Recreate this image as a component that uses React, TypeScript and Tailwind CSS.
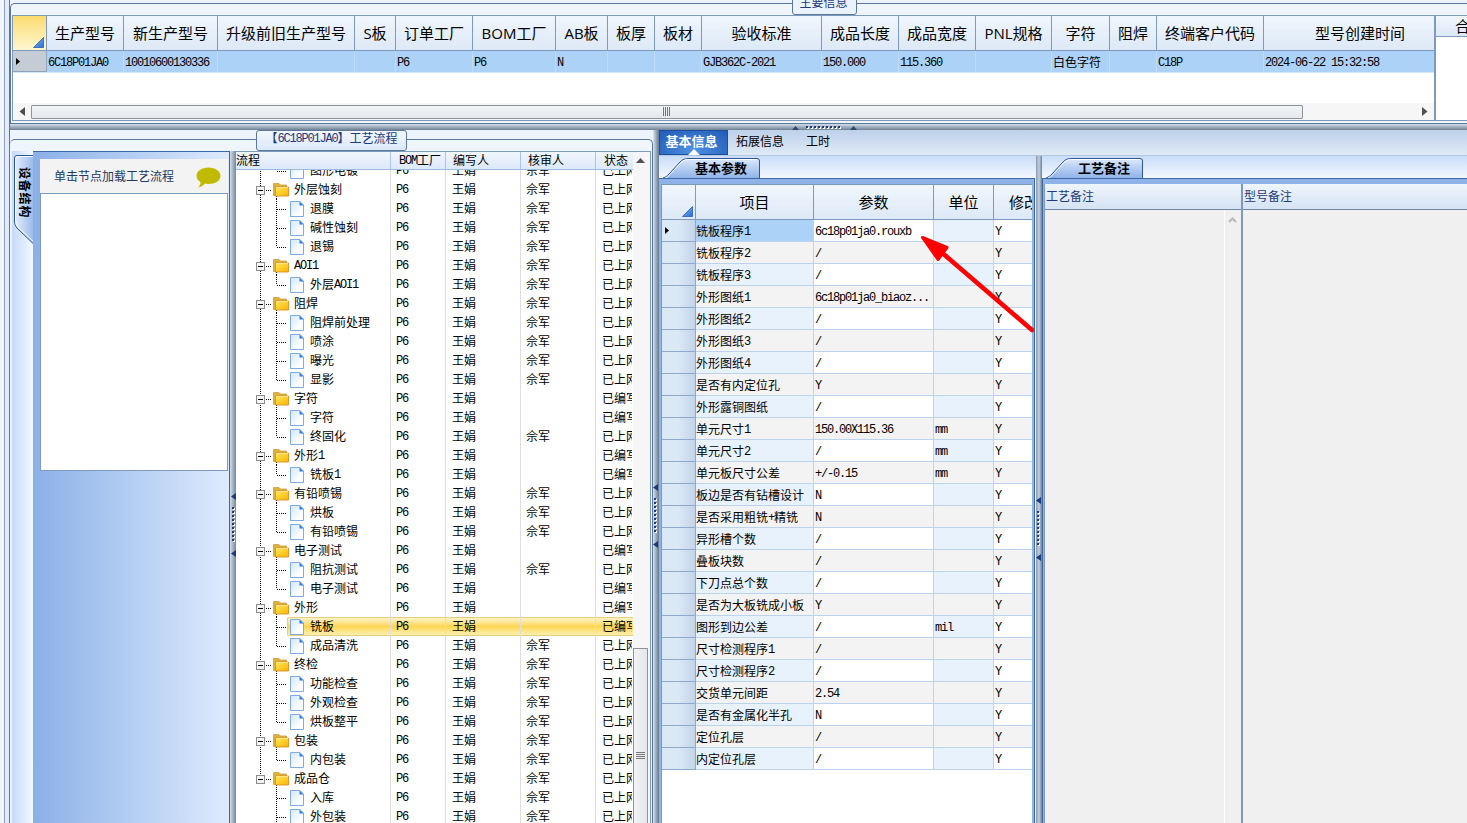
import React from 'react';

const SONG = "font-['Noto_Sans_CJK_SC',sans-serif]";
const HEI = "font-['Open_Sans','Noto_Sans_CJK_SC',sans-serif]";

/* Half-width characters take 6px and full-width ones 12px. */
function T({ s }: { s: string }) {
  const runs = s.match(/[\x20-\x7e]+|[^\x20-\x7e]+/g) ?? [];
  return (
    <span className="font-['Noto_Sans_CJK_SC',sans-serif] whitespace-pre">
      {runs.map((r, i) =>
        r.charCodeAt(0) < 128 ? (
          <span key={i} className="align-[1px] font-['Liberation_Mono',monospace] text-[12px] leading-none tracking-[-1.2px]">{r}</span>
        ) : (
          <span key={i}>{r}</span>
        ),
      )}
    </span>
  );
}

const orders = [
  { h: '生产型号', v: '6C18P01JA0', w: 'w-[77px]' },
  { h: '新生产型号', v: '10010600130336', w: 'w-[94px]' },
  { h: '升级前旧生产型号', v: '', w: 'w-[137px]' },
  { h: 'S板', v: '', w: 'w-[41px]' },
  { h: '订单工厂', v: 'P6', w: 'w-[77px]' },
  { h: 'BOM工厂', v: 'P6', w: 'w-[83px]' },
  { h: 'AB板', v: 'N', w: 'w-[52px]' },
  { h: '板厚', v: '', w: 'w-[47px]' },
  { h: '板材', v: '', w: 'w-[47px]' },
  { h: '验收标准', v: 'GJB362C-2021', w: 'w-[120px]' },
  { h: '成品长度', v: '150.000', w: 'w-[77px]' },
  { h: '成品宽度', v: '115.360', w: 'w-[77px]' },
  { h: 'PNL规格', v: '', w: 'w-[76px]' },
  { h: '字符', v: '白色字符', w: 'w-[58px]' },
  { h: '阻焊', v: '', w: 'w-[47px]' },
  { h: '终端客户代码', v: 'C18P', w: 'w-[107px]' },
  { h: '型号创建时间', v: '2024-06-22 15:32:58', w: 'w-[193px]' },
];

type Node = { n: string; f?: boolean; last?: boolean; done?: boolean; sel?: boolean };
const nodes: Node[] = [
  { n: '图形电镀', last: true, done: true },
  { n: '外层蚀刻', f: true, done: true },
  { n: '退膜', done: true },
  { n: '碱性蚀刻', done: true },
  { n: '退锡', last: true, done: true },
  { n: 'AOI1', f: true, done: true },
  { n: '外层AOI1', last: true, done: true },
  { n: '阻焊', f: true, done: true },
  { n: '阻焊前处理', done: true },
  { n: '喷涂', done: true },
  { n: '曝光', done: true },
  { n: '显影', last: true, done: true },
  { n: '字符', f: true },
  { n: '字符' },
  { n: '终固化', last: true, done: true },
  { n: '外形1', f: true },
  { n: '铣板1', last: true },
  { n: '有铅喷锡', f: true, done: true },
  { n: '烘板', done: true },
  { n: '有铅喷锡', last: true, done: true },
  { n: '电子测试', f: true },
  { n: '阻抗测试', done: true },
  { n: '电子测试', last: true },
  { n: '外形', f: true },
  { n: '铣板', sel: true },
  { n: '成品清洗', last: true, done: true },
  { n: '终检', f: true, done: true },
  { n: '功能检查', done: true },
  { n: '外观检查', done: true },
  { n: '烘板整平', last: true, done: true },
  { n: '包装', f: true, done: true },
  { n: '内包装', last: true, done: true },
  { n: '成品仓', f: true, done: true },
  { n: '入库', done: true },
  { n: '外包装', done: true },
];
const lastRoot = 32;

const params: [string, string, string][] = [
  ['铣板程序1', '6c18p01ja0.rouxb', ''],
  ['铣板程序2', '/', ''],
  ['铣板程序3', '/', ''],
  ['外形图纸1', '6c18p01ja0_biaoz...', ''],
  ['外形图纸2', '/', ''],
  ['外形图纸3', '/', ''],
  ['外形图纸4', '/', ''],
  ['是否有内定位孔', 'Y', ''],
  ['外形露铜图纸', '/', ''],
  ['单元尺寸1', '150.00X115.36', 'mm'],
  ['单元尺寸2', '/', 'mm'],
  ['单元板尺寸公差', '+/-0.15', 'mm'],
  ['板边是否有钻槽设计', 'N', ''],
  ['是否采用粗铣+精铣', 'N', ''],
  ['异形槽个数', '/', ''],
  ['叠板块数', '/', ''],
  ['下刀点总个数', '/', ''],
  ['是否为大板铣成小板', 'Y', ''],
  ['图形到边公差', '/', 'mil'],
  ['尺寸检测程序1', '/', ''],
  ['尺寸检测程序2', '/', ''],
  ['交货单元间距', '2.54', ''],
  ['是否有金属化半孔', 'N', ''],
  ['定位孔层', '/', ''],
  ['内定位孔层', '/', ''],
];

function Corner() {
  return (
    <svg width="11" height="11" className="block">
      <defs>
        <linearGradient id="corner" x1="0" y1="0" x2="1" y2="1">
          <stop offset="0.4" stopColor="#5b9bf0" />
          <stop offset="1" stopColor="#2e6fd0" />
        </linearGradient>
      </defs>
      <path d="M10.5 0.5V10.5H0.5Z" fill="url(#corner)" stroke="#2a5cb0" strokeWidth="0.8" />
    </svg>
  );
}

function Pointer() {
  return (
    <svg width="4" height="7" className="block">
      <path d="M0 0V7L4 3.5Z" fill="#000" />
    </svg>
  );
}

function GripV() {
  return (
    <svg width="5" height="64" className="block shrink-0">
      <path d="M5 0V7L0 3.5Z" fill="#1f3a78" />
      {Array.from({ length: 9 }, (_, i) => (
        <g key={i}>
          <rect x="2" y={15 + i * 4} width="2" height="2" fill="#fff" />
          <rect x="1" y={14 + i * 4} width="2" height="2" fill="#1f3a78" />
        </g>
      ))}
      <path d="M5 57V64L0 60.5Z" fill="#1f3a78" />
    </svg>
  );
}

function GripH() {
  return (
    <svg width="66" height="5" className="block">
      <path d="M0 5H7L3.5 1Z" fill="#2f466e" />
      {Array.from({ length: 9 }, (_, i) => (
        <g key={i}>
          <rect x={15 + i * 4} y="2" width="2" height="2" fill="#fff" />
          <rect x={14 + i * 4} y="1" width="2" height="2" fill="#1f3a78" />
        </g>
      ))}
      <path d="M58 5H65L61.5 1Z" fill="#2f466e" />
    </svg>
  );
}

function Guides({ node, i }: { node: Node; i: number }) {
  const dot = { stroke: '#000', strokeWidth: 1, strokeDasharray: '1 1' };
  const inRoot = i < lastRoot;
  return (
    <svg width={node.f ? 54 : 71} height="19" className="block shrink-0" shapeRendering="crispEdges">
      {inRoot && <path d="M24.5 0V19" {...dot} strokeDashoffset={i % 2} fill="none" />}
      {i === lastRoot && <path d="M24.5 0V10" {...dot} fill="none" />}
      {node.f ? (
        <g>
          <path d="M30 10.5H36" {...dot} />
          <path d="M40.5 16V19" {...dot} />
          <rect x="20.5" y="6.5" width="8" height="8" fill="#f4f4f4" stroke="#8c8c8c" />
          <path d="M22 10.5H27" stroke="#000" />
          <g shapeRendering="auto">
            <path d="M37.500 3.500H43L44.500 5H50.500V15.500H37.500Z" fill="#dcb238" stroke="#c9a04a" strokeWidth="0.8" />
            <path d="M39.500 7H52.500V16H39.500Z" fill="url(#fold)" stroke="#d9902a" strokeWidth="0.9" />
            <path d="M40 7.600H52" stroke="#fff3a8" strokeWidth="0.8" />
          </g>
        </g>
      ) : (
        <g>
          <path d={node.last ? 'M40.5 0V10' : 'M40.5 0V19'} {...dot} strokeDashoffset={i % 2} fill="none" />
          <path d="M41 10.5H51" {...dot} />
          <g shapeRendering="auto">
            <path d="M54.500 2.500H64L67.500 6V17.500H54.500Z" fill="url(#page)" stroke="#7fabe2" strokeLinejoin="round" />
            <path d="M63.500 2.500V6.500H67.500Z" fill="#2f7be0" />
          </g>
        </g>
      )}
    </svg>
  );
}

function SubTab({ label, id, width }: { label: string; id: string; width: number }) {
  return (
    <div className="flex h-[22px] shrink-0 pl-[4px]">
      <div className="relative h-[22px]">
        <svg width={width} height="22" className="block">
          <defs>
            <linearGradient id={id} x1="0" y1="0" x2="0" y2="1">
              <stop offset="0" stopColor="#dce9fc" />
              <stop offset="1" stopColor="#8fb3e8" />
            </linearGradient>
          </defs>
          <path
            d={`M0 22C3 21 4 20 6 18L17 6C20 3 22 2.500 26 2.500H${width - 4}Q${width - 1.5} 2.500 ${width - 1.5} 5V22`}
            fill={`url(#${id})`}
            stroke="#2c5796"
          />
          <path
            d={`M2 22C4 21.500 5 20.500 7 18.500L18 6.500C21 4 23 3.500 26 3.500H${width - 4}`}
            fill="none"
            stroke="#fff"
            strokeWidth="0.9"
          />
        </svg>
        <span className="absolute top-[3px] right-[14px] font-['Noto_Sans_CJK_SC',sans-serif] text-[13px] leading-[18px] font-bold whitespace-nowrap text-black">
          {label}
        </span>
      </div>
    </div>
  );
}

const bar = 'bg-linear-to-b from-[#f0f6fd] to-[#dde9f7]';

function TopSection() {
  return (
    <div className="relative flex h-[124px] shrink-0 flex-col bg-[#ecf3fc] pt-[3px]">
      <div className="flex grow rounded-tl-[5px] border-t border-b border-l border-[#5c7899] bg-[#eff5fd] pt-[11px] pb-[2px] pl-px">
        <div className="flex w-[1423px] shrink-0 flex-col overflow-hidden border border-[#7e9abd] bg-white">
          <div className={'flex h-[35px] shrink-0 border-b border-[#7e9abd] ' + bar}>
            <div className="flex w-[34px] shrink-0 items-end justify-end border-r border-[#7e9abd] bg-linear-to-b from-[#fbdc6c] to-[#fff6d0] pr-[2px] pb-[2px]">
              <Corner />
            </div>
            {orders.map((c) => (
              <div
                key={c.h}
                className={`${c.w} ${HEI} flex shrink-0 items-center justify-center border-r border-[#7e9abd] text-[15px] leading-[20px] font-normal whitespace-nowrap text-black`}
              >
                {c.h}
              </div>
            ))}
          </div>
          <div className="flex h-[22px] shrink-0 border-b border-[#d5e6fa] bg-[#add2f7]">
            <div className="flex w-[34px] shrink-0 items-center border-r border-b border-[#8fa3bc] bg-[#c5ccd6] pl-[3px]">
              <Pointer />
            </div>
            {orders.map((c) => (
              <div
                key={c.h}
                className={`${c.w} ${SONG} shrink-0 border-r border-[#bfdcfa] pl-px text-[12px] leading-[21px] text-black`}
              >
                <T s={c.v} />
              </div>
            ))}
          </div>
          <div className="grow" />
          <div className="flex h-[17px] shrink-0 items-center bg-[#f6f6f6]">
            <div className="flex w-[18px] justify-center">
              <svg width="6" height="9"><path d="M6 0V9L0.500 4.500Z" fill="#505050" /></svg>
            </div>
            <div className="flex h-[14px] w-[1272px] items-center justify-center rounded-[1px] border border-[#8d949c] bg-linear-to-b from-[#f3f4f6] to-[#e4e8ec]">
              <svg width="8" height="9"><path d="M.5 0V9M2.500 0V9M4.500 0V9M6.500 0V9" stroke="#777" /></svg>
            </div>
            <div className="flex grow justify-end pr-[6px]">
              <svg width="6" height="9"><path d="M0 0V9L5.500 4.500Z" fill="#505050" /></svg>
            </div>
          </div>
        </div>
        <div className="flex w-[32px] flex-col overflow-hidden border-t border-b border-l border-[#7e9abd] bg-white">
          <div className={`flex h-[21px] shrink-0 items-center border-b border-[#7e9abd] pl-[19px] ${HEI} text-[15px] leading-[20px] whitespace-nowrap ${bar}`}>
            合
          </div>
        </div>
      </div>
      <div className="absolute top-[-10px] left-[782px] flex h-[25px] w-[65px] items-end justify-center rounded-[3px] border border-[#5c7899] bg-[#eaf2fc] pr-[2px] pb-[4px] text-[12px] leading-[16px] text-[#1f3a78]">
        <T s="主要信息" />
      </div>
    </div>
  );
}

function StructurePanel() {
  return (
    <div className="flex w-[220px] shrink-0">
      <div className="w-[2px] shrink-0 bg-[#eaf2fc]" />
      <div className="relative w-[21px] shrink-0 bg-linear-to-r from-[#c6dafa] to-[#f3f8fe]">
        <svg width="24" height="95" className="absolute top-0 left-0">
          <defs>
            <linearGradient id="side" x1="0" y1="0" x2="1" y2="0">
              <stop offset="0" stopColor="#e6f0fe" />
              <stop offset="1" stopColor="#8fb3e8" />
            </linearGradient>
          </defs>
          <path d="M24 4.500H5Q2.500 4.500 2.500 7V71Q2.500 74 5 77L22 93H24Z" fill="url(#side)" />
          <path d="M22 1V4.500H5Q2.500 4.500 2.500 7V71Q2.500 74 5 77L21.500 93" fill="none" stroke="#2c5796" />
          <path d="M22 5.500H6Q3.500 5.500 3.500 8V70.500Q3.500 73 6 76L22.500 91.500" fill="none" stroke="#fff" strokeWidth="0.9" />
        </svg>
        <div className="absolute top-[16px] left-[6px] font-['Noto_Sans_CJK_SC',sans-serif] text-[12px] leading-[14px] font-bold tracking-[0.8px] whitespace-nowrap text-black [text-orientation:sideways] [writing-mode:vertical-rl]">
          设备结构
        </div>
      </div>
      <div className="z-10 flex w-[197px] shrink-0 flex-col border-t border-r border-[#3c69a4] bg-linear-to-r from-[#8bb0e7] to-[#deebfd] pt-[7px] [clip-path:none]">
        <div className="ml-[7px] flex h-[34px] w-[188px] items-center justify-between bg-[#f3f3f3] pr-[7px] pl-[14px] text-[12px] leading-[16px] text-[#233a60]">
          <T s="单击节点加载工艺流程" />
          <svg width="25" height="21" className="mt-[2px]">
            <path d="M12.500 0.500C19 0.500 24.500 4 24.500 9C24.500 14 19 17 12.500 17C11 17 10 17 9 16.600C7 19 5 20 2 20.500C3.500 19 4.500 17.500 4.500 15.200C2 13.500 0.500 11.500 0.500 9C0.500 4 6 0.500 12.500 0.500Z" fill="#c0bb00" />
          </svg>
        </div>
        <div className="ml-[7px] h-[278px] w-[188px] border border-[#7e9abd] bg-white" />
      </div>
    </div>
  );
}

function ProcessTree() {
  return (
    <div className="flex w-[415px] shrink-0 border-t border-r border-[#7e9abd] bg-white text-[12px] text-black">
      <div className="flex w-[397px] shrink-0 flex-col overflow-hidden">
        <div className="flex h-[18px] shrink-0 border-b border-[#9dbbdf] bg-linear-to-b from-[#f0f6fd] to-[#dce9f9] leading-[16px]">
          <div className="w-[155px] shrink-0 border-r border-[#a9c4e4]"><T s="流程" /></div>
          <div className="w-[55px] shrink-0 overflow-hidden border-r border-[#a9c4e4] pl-[8px]"><T s="BOM工厂" /></div>
          <div className="w-[75px] shrink-0 border-r border-[#a9c4e4] pl-[7px]"><T s="编写人" /></div>
          <div className="w-[75px] shrink-0 border-r border-[#a9c4e4] pl-[7px]"><T s="核审人" /></div>
          <div className="grow pl-[8px]"><T s="状态" /></div>
        </div>
        <div className="min-h-0 grow overflow-hidden">
          <div className="-mt-[9px]">
            {nodes.map((d, i) => (
              <div key={i} className="relative flex h-[19px] leading-[18px]">
                {d.sel && (
                  <div className="absolute top-0 right-0 left-[51px] h-[19px] rounded-l-[2px] border border-r-0 border-[#e5cf7c] bg-linear-to-b from-[#fff4c6] via-[#fdd650] to-[#fff0ae]" />
                )}
                <div className="relative flex w-[155px] shrink-0 border-r border-[#dedede]">
                  <Guides node={d} i={i} />
                  <span className={d.f ? 'pl-[4px]' : 'pl-[3px]'}><T s={d.n} /></span>
                </div>
                <div className="relative w-[55px] shrink-0 border-r border-[#dedede] pl-[5px]"><T s="P6" /></div>
                <div className="relative w-[75px] shrink-0 border-r border-[#dedede] pl-[6px]"><T s="王娟" /></div>
                <div className="relative w-[75px] shrink-0 border-r border-[#dedede] pl-[5px]"><T s={d.done ? '佘军' : ''} /></div>
                <div className="relative w-[36px] overflow-hidden pl-[6px]"><T s={d.done ? '已上网' : '已编写'} /></div>
              </div>
            ))}
          </div>
        </div>
      </div>
      <div className="flex w-[17px] flex-col bg-[#f6f6f6] pr-[2px]">
        <div className="flex h-[16px] items-center justify-center">
          <svg width="9" height="5"><path d="M0 5H9L4.500 0Z" fill="#505050" /></svg>
        </div>
        <div className="h-[480px]" />
        <div className="flex grow flex-col items-center rounded-t-[1px] border border-b-0 border-[#8d949c] bg-linear-to-r from-[#f3f4f6] to-[#e2e6ea] pt-[103px]">
          <svg width="9" height="8"><path d="M0 .5H9M0 2.500H9M0 4.500H9M0 6.500H9" stroke="#777" /></svg>
        </div>
      </div>
    </div>
  );
}

function ParamTable() {
  return (
    <div className="flex w-[376px] shrink-0 flex-col overflow-hidden border-t border-r border-[#3c69a4] bg-[#8fb3e8] pt-[5px] pr-[2px] pl-[2px]">
      <div className="flex min-h-0 grow flex-col overflow-hidden border-t border-l border-[#7e9abd] bg-white">
        <div className={`flex h-[35px] shrink-0 border-b border-[#7e9abd] ${HEI} text-[15px] leading-[34px] text-black ${bar}`}>
          <div className="flex w-[34px] shrink-0 items-end justify-end border-r border-[#7e9abd] pr-[2px] pb-[2px]"><Corner /></div>
          <div className="w-[118px] shrink-0 border-r border-[#7e9abd] text-center">项目</div>
          <div className="w-[120px] shrink-0 border-r border-[#7e9abd] text-center">参数</div>
          <div className="w-[60px] shrink-0 border-r border-[#7e9abd] text-center">单位</div>
          <div className="shrink-0 pl-[15px] whitespace-nowrap">修改</div>
        </div>
        {params.map(([name, val, unit], i) => {
          const odd = i % 2 === 1;
          const tint = odd ? 'bg-[#f3f3f3]' : 'bg-[#e8f2fd]';
          const base = odd ? 'bg-[#f3f3f3]' : 'bg-white';
          return (
            <div key={name} className={`flex h-[22px] shrink-0 ${SONG} text-[12px] leading-[21px] text-black`}>
              <div className="flex w-[34px] shrink-0 items-center border-r border-b border-[#8fa9cb] bg-linear-to-r from-[#dbe8f6] from-50% to-[#c3d4ea] pl-[3px]">
                {i === 0 && <Pointer />}
              </div>
              <div className={`w-[118px] shrink-0 border-r border-b border-[#bcd3ee] ${i === 0 ? 'bg-[#add2f7]' : tint}`}><T s={name} /></div>
              <div className={`w-[120px] shrink-0 border-r border-b border-[#bcd3ee] pl-px ${base}`}><T s={val} /></div>
              <div className={`w-[60px] shrink-0 border-r border-b border-[#bcd3ee] pl-px ${tint}`}><T s={unit} /></div>
              <div className={`w-[40px] shrink-0 border-b border-[#bcd3ee] pl-px ${base}`}><T s="Y" /></div>
            </div>
          );
        })}
      </div>
    </div>
  );
}

function Notes() {
  const head = 'h-[26px] shrink-0 border-b border-[#7088a8] bg-linear-to-b from-[#eff5fc] to-[#d5e3f3] pl-px text-[12px] leading-[23px] text-[#1f3a78]';
  return (
    <div className="flex min-h-0 grow flex-col border-t border-l border-[#3c69a4] bg-[#8fb3e8] pt-[5px] pl-px">
      <div className="flex grow bg-[#f0f0f0]">
        <div className="flex w-[199px] shrink-0 flex-col border-r-2 border-l border-[#8098b8]">
          <div className={head}><T s="工艺备注" /></div>
          <div className="flex grow justify-end">
            <div className="w-[17px] border-l border-white pt-[7px] pl-[3px]">
              <svg width="9" height="6"><path d="M1 5L4.500 1.500L8 5" fill="none" stroke="#b8b8b8" strokeWidth="2" /></svg>
            </div>
          </div>
        </div>
        <div className="flex grow flex-col">
          <div className={head}><T s="型号备注" /></div>
        </div>
      </div>
    </div>
  );
}

const strip = 'bg-linear-to-b from-[#cadcf9] to-[#f4f8fe]';

export default function App() {
  return (
    <div className="relative flex h-[823px] w-[1467px] overflow-hidden bg-[#eaf2fc]">
      <svg width="0" height="0" className="absolute">
        <defs>
          <linearGradient id="fold" x1="0" y1="0" x2="1" y2="1">
            <stop offset="0" stopColor="#ffe85a" />
            <stop offset="1" stopColor="#fbb400" />
          </linearGradient>
          <linearGradient id="page" x1="0" y1="0" x2="1" y2="1">
            <stop offset="0" stopColor="#d3e8fd" />
            <stop offset="0.7" stopColor="#fbfdff" />
          </linearGradient>
        </defs>
      </svg>
      <div className="w-[5px] shrink-0 border-r border-[#8ba2c2] bg-[#f2f6fc]" />
      <div className="w-[5px] shrink-0 border-r border-[#5c7899] bg-[#e2ebf7]" />
      <div className="flex w-[1457px] shrink-0 flex-col">
        <TopSection />
        <div className="flex h-[6px] shrink-0 items-end bg-linear-to-b from-[#d3dfec] to-[#6f8194] pl-[782px]">
          <GripH />
        </div>
        <div className="flex min-h-0 grow">
          <div className="relative flex w-[643px] shrink-0 flex-col bg-[#edf4fd] pt-[9px]">
            <div className="flex min-h-0 grow rounded-t-[5px] border-t border-r border-[#5c7899] bg-[#eff5fd] pt-[11px]">
              <StructurePanel />
              <div className="flex w-[6px] shrink-0 flex-col items-end bg-linear-to-r from-[#d3dfec] to-[#75879c] pt-[342px]">
                <GripV />
              </div>
              <ProcessTree />
            </div>
            <div className="absolute top-0 left-[246px] flex h-[21px] w-[151px] justify-center rounded-[3px] border border-[#5c7899] bg-linear-to-b from-[#f2f7fe] to-[#dbe8f8] text-[12px] leading-[13px] text-[#1f3a78]">
              <T s="【6C18P01JA0】工艺流程" />
            </div>
          </div>
          <div className="flex w-[6px] shrink-0 flex-col items-start bg-linear-to-r from-[#dbe5f0] to-[#64788f] pt-[354px]">
            <GripV />
          </div>
          <div className="flex min-w-0 grow flex-col">
            <div className="flex h-[26px] shrink-0 border-b border-[#b3c8e0] bg-linear-to-b from-[#bdd1ea] to-[#dfeaf6] text-[12px] leading-[21px] text-black">
              <div className="relative w-[69px] shrink-0 border border-[#1b4f9f] bg-radial-[at_50%_80%] from-[#4f92e4] to-[#2259b5] pr-[4px] text-center font-['Noto_Sans_CJK_SC',sans-serif] text-[13px] leading-[20px] font-bold text-white">
                基本信息
                <svg width="12" height="6" className="absolute bottom-[-1px] left-[28px]"><path d="M0 6L6 0L12 6Z" fill="#fff" /></svg>
              </div>
              <div className="pl-[8px]"><T s="拓展信息" /></div>
              <div className="pl-[22px]"><T s="工时" /></div>
            </div>
            <div className="flex min-h-0 grow">
              <div className="flex w-[377px] shrink-0 flex-col">
                <div className={'h-[22px] shrink-0 ' + strip}>
                  <SubTab label="基本参数" id="tabA" width={98} />
                </div>
                <div className="flex min-h-0 grow"><ParamTable /></div>
              </div>
              <div className="flex w-[6px] shrink-0 flex-col items-start bg-linear-to-r from-[#8699b0] via-[#c6d1de] to-[#6d8098] pt-[341px]">
                <GripV />
              </div>
              <div className="flex min-w-0 grow flex-col">
                <div className={'h-[22px] shrink-0 ' + strip}>
                  <SubTab label="工艺备注" id="tabB" width={98} />
                </div>
                <Notes />
              </div>
            </div>
          </div>
        </div>
      </div>
      <svg width="114" height="100" className="absolute top-[233px] left-[920px]">
        <path d="M20 18L112 97" stroke="#fe0000" strokeWidth="4.600" strokeLinecap="round" />
        <path d="M2.500 4.500L27 14.500L18 26.500Z" fill="#fe0000" stroke="#fe0000" strokeWidth="3" strokeLinejoin="round" />
      </svg>
    </div>
  );
}
